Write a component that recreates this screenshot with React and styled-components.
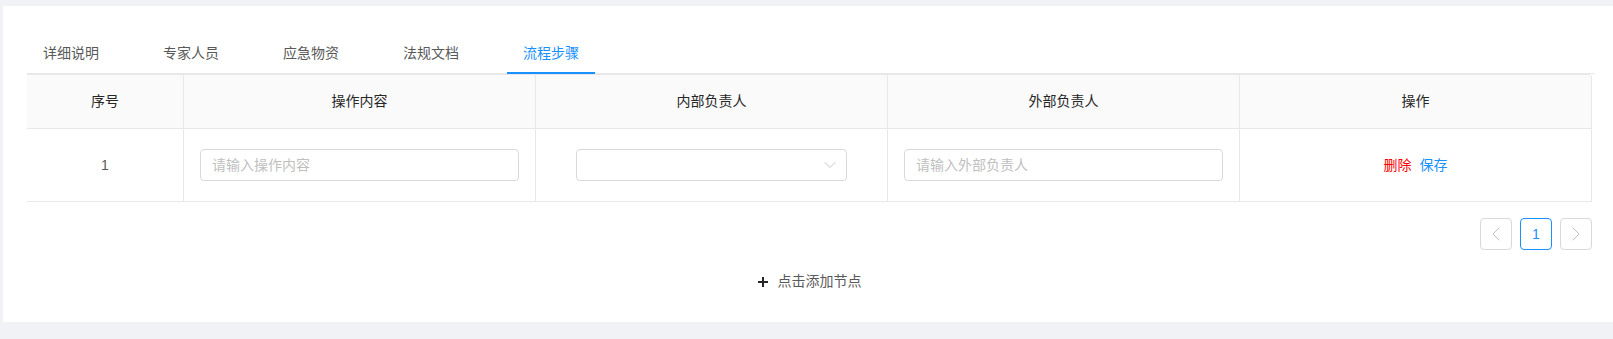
import React from "react";
import styled, { createGlobalStyle } from "styled-components";
import { ChevronDown, ChevronLeft, ChevronRight } from "lucide-react";

const GlobalStyle = createGlobalStyle`
  html, body {
    margin: 0;
    padding: 0;
    background: #f0f2f5;
    overflow: hidden;
  }
  body {
    font-family: "Liberation Sans", "Noto Sans CJK SC", sans-serif;
    font-size: 14px;
    color: #595959;
  }
  * {
    box-sizing: border-box;
  }
`;

const tabs = ["详细说明", "专家人员", "应急物资", "法规文档", "流程步骤"];
const columns = ["序号", "操作内容", "内部负责人", "外部负责人", "操作"];
const colWidths = [157, 352, 352, 352, 352];

const Page = styled.div`
  height: 339px;
  padding: 6px 0 0 3px;
`;

const Card = styled.section`
  background: #fff;
  height: 316px;
  padding: 25px 18px 0 24px;
`;

const Content = styled.div`
  width: 1568px;
`;

const TabNav = styled.div`
  display: flex;
  border-bottom: 1px solid #e8e8e8;
`;

const Tab = styled.div`
  position: relative;
  padding: 12px 16px 9px;
  margin-right: 32px;
  line-height: 21px;
  color: ${(p) => (p.$active ? "#1890ff" : "#595959")};
  white-space: nowrap;
  cursor: pointer;

  &::after {
    content: "";
    display: ${(p) => (p.$active ? "block" : "none")};
    position: absolute;
    left: 0;
    right: 0;
    bottom: -1px;
    height: 2px;
    background: #1890ff;
  }
`;

const Table = styled.table`
  width: 1565px;
  table-layout: fixed;
  border-collapse: separate;
  border-spacing: 0;
`;

const HeadCell = styled.th`
  background: #fafafa;
  border-top: 1px solid #e8e8e8;
  border-bottom: 1px solid #e8e8e8;
  border-right: 1px solid #e8e8e8;
  padding: 16px;
  line-height: 21px;
  font-weight: 400;
  color: #262626;
  text-align: center;

  &:last-child {
    border-top-right-radius: 4px;
  }
`;

const BodyCell = styled.td`
  border-bottom: 1px solid #e8e8e8;
  border-right: 1px solid #e8e8e8;
  padding: 20px 16px;
  line-height: 21px;
  color: #595959;
  text-align: center;
  vertical-align: middle;
`;

const Input = styled.input`
  display: block;
  width: 100%;
  height: 32px;
  padding: 4px 11px;
  border: 1px solid #d9d9d9;
  border-radius: 4px;
  font: inherit;
  color: #595959;
  outline: none;

  &::placeholder {
    color: #bfbfbf;
  }
`;

const Select = styled.div`
  display: flex;
  align-items: center;
  justify-content: flex-end;
  height: 32px;
  margin: 0 24px;
  padding: 0 6px;
  border: 1px solid #d9d9d9;
  border-radius: 4px;
  color: #bfbfbf;
`;

const Actions = styled.div`
  display: flex;
  justify-content: center;
  gap: 8px;
`;

const ActionLink = styled.a`
  color: ${(p) => (p.$danger ? "#ff0000" : "#1890ff")};
  cursor: pointer;
`;

const Pagination = styled.div`
  display: flex;
  justify-content: flex-end;
  gap: 8px;
  width: 1565px;
  margin-top: 16px;
`;

const PageButton = styled.div`
  display: flex;
  align-items: center;
  justify-content: center;
  width: 32px;
  height: 32px;
  border: 1px solid ${(p) => (p.$active ? "#1890ff" : "#d9d9d9")};
  border-radius: 4px;
  color: ${(p) => (p.$active ? "#1890ff" : "#bfbfbf")};
  line-height: 30px;
`;

const AddRow = styled.div`
  display: flex;
  align-items: center;
  justify-content: center;
  gap: 10px;
  width: 1565px;
  margin-top: 21px;
  line-height: 21px;
  color: #595959;
  cursor: pointer;
`;

const PlusIcon = () => (
  <svg width="10" height="10" viewBox="0 0 10 10">
    <path d="M5 0v10M0 5h10" stroke="#262626" strokeWidth="2" />
  </svg>
);

export default function App() {
  return (
    <>
      <GlobalStyle />
      <Page>
        <Card>
          <Content>
            <TabNav>
              {tabs.map((t, i) => (
                <Tab key={t} $active={i === tabs.length - 1}>
                  {t}
                </Tab>
              ))}
            </TabNav>
            <Table>
              <colgroup>
                {colWidths.map((w, i) => (
                  <col key={i} style={{ width: w }} />
                ))}
              </colgroup>
              <thead>
                <tr>
                  {columns.map((c) => (
                    <HeadCell key={c}>{c}</HeadCell>
                  ))}
                </tr>
              </thead>
              <tbody>
                <tr>
                  <BodyCell>1</BodyCell>
                  <BodyCell>
                    <Input placeholder="请输入操作内容" />
                  </BodyCell>
                  <BodyCell>
                    <Select>
                      <ChevronDown size={20} strokeWidth={1.1} />
                    </Select>
                  </BodyCell>
                  <BodyCell>
                    <Input placeholder="请输入外部负责人" />
                  </BodyCell>
                  <BodyCell>
                    <Actions>
                      <ActionLink $danger>删除</ActionLink>
                      <ActionLink>保存</ActionLink>
                    </Actions>
                  </BodyCell>
                </tr>
              </tbody>
            </Table>
            <Pagination>
              <PageButton>
                <ChevronLeft size={24} strokeWidth={1} />
              </PageButton>
              <PageButton $active>1</PageButton>
              <PageButton>
                <ChevronRight size={24} strokeWidth={1} />
              </PageButton>
            </Pagination>
            <AddRow>
              <PlusIcon />
              <span>点击添加节点</span>
            </AddRow>
          </Content>
        </Card>
      </Page>
    </>
  );
}
